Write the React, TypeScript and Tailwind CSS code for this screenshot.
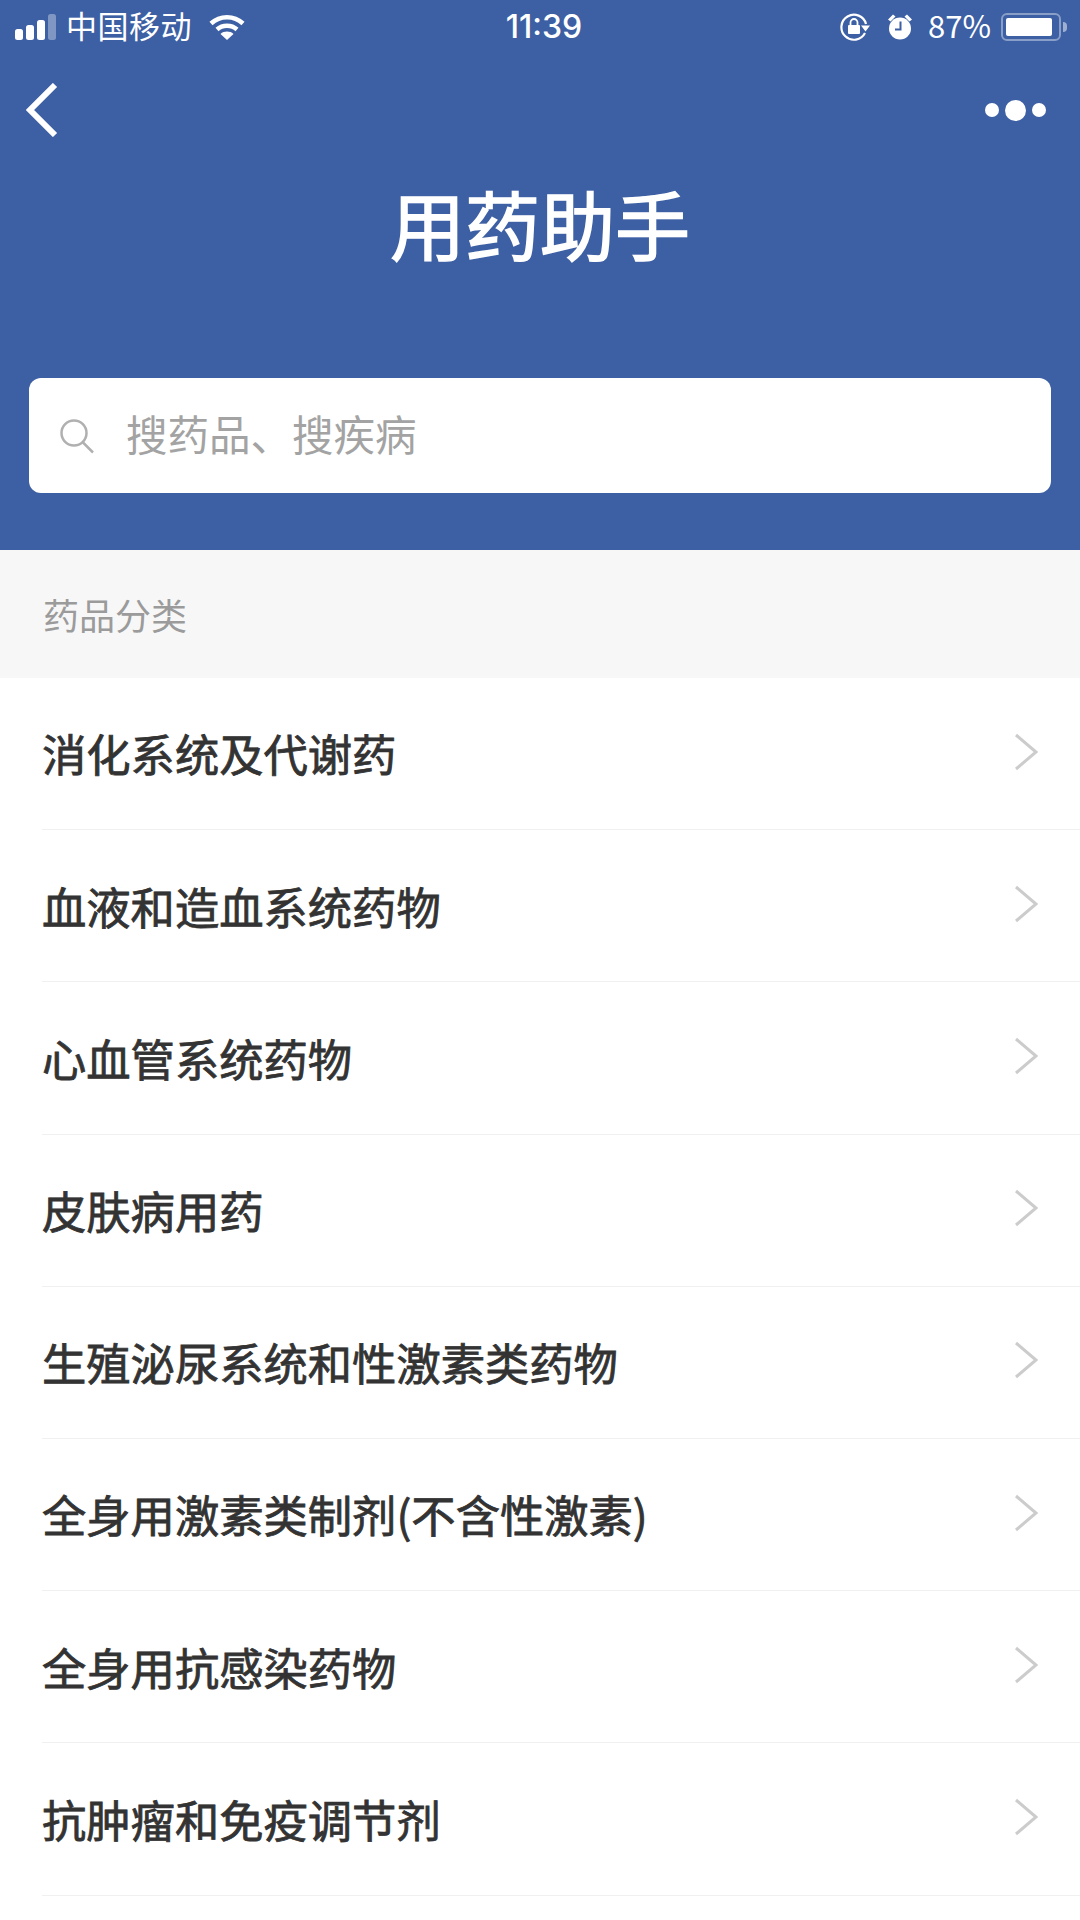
const CATEGORIES = [
  '消化系统及代谢药',
  '血液和造血系统药物',
  '心血管系统药物',
  '皮肤病用药',
  '生殖泌尿系统和性激素类药物',
  '全身用激素类制剂(不含性激素)',
  '全身用抗感染药物',
  '抗肿瘤和免疫调节剂',
]

function StatusBar() {
  return (
    <div className="h-[54px] grid grid-cols-[1fr_auto_1fr] items-center pl-[15px] pr-[13px] text-white">
      <div className="flex items-center">
        <svg width="41" height="26" viewBox="0 0 41 26" fill="white">
          <rect x="0" y="15" width="8" height="11" rx="2.5" />
          <rect x="11" y="11" width="8" height="15" rx="2.5" />
          <rect x="22" y="6" width="8" height="20" rx="2.5" />
          <rect x="33" y="0" width="8" height="26" rx="2.5" opacity="0.35" />
        </svg>
        <span className="ml-[10px] pb-[5px] text-[31px] leading-none tracking-[0.5px]">中国移动</span>
        <svg className="ml-[17px]" width="36" height="26" viewBox="0 0 36 26" fill="none" stroke="white" strokeWidth="4.5">
          <path d="M2 9.5C11 1 25 1 34 9.5" />
          <path d="M8 15.5C13.5 10.5 22.5 10.5 28 15.5" />
          <path d="M18 26L11.5 20C15 16.8 21 16.8 24.5 20Z" fill="white" stroke="none" />
        </svg>
      </div>
      <span className="ml-[6px] font-['Inter'] text-[32px] leading-none font-medium">11:39</span>
      <div className="flex items-center justify-end">
        <svg width="30" height="28" viewBox="0 0 30 28" fill="none" stroke="white" strokeWidth="2.2">
          <path d="M25 20A12.5 12.5 0 1 1 26 11" />
          <path d="M21 12.5h9l-4.5 6z" fill="white" stroke="none" />
          <rect x="8" y="12" width="12" height="9" rx="1" fill="white" stroke="none" />
          <path d="M10.5 12V9.5a3.5 3.5 0 0 1 7 0V12" strokeWidth="1.8" />
        </svg>
        <svg className="ml-[17px]" width="26" height="28" viewBox="0 0 26 28" fill="white">
          <circle cx="13" cy="15.5" r="11" />
          <path d="M1 6.5L6 1.500l2.500 2-5 5zM25 6.500l-5-5-2.500 2 5 5z" />
          <path d="M13.500 8.500V16.500H8" fill="none" stroke="#3d5fa3" strokeWidth="2" />
        </svg>
        <span className="ml-[15px] pb-[5px] text-[31px] leading-none">87%</span>
        <div className="ml-[10px] flex items-center">
          <div className="w-[60px] h-[28px] rounded-[6px] border-2 border-white/40 p-[3px]">
            <div className="h-full w-[46px] rounded-[2px] bg-white" />
          </div>
          <div className="ml-[2px] w-[4px] h-[10px] rounded-r-full bg-white/50" />
        </div>
      </div>
    </div>
  )
}

function Header() {
  return (
    <div className="h-[550px] bg-[#3d5fa3] flex flex-col">
      <StatusBar />
      <div className="h-[112px] flex items-center justify-between pl-[26px] pr-[34px]">
        <svg width="32" height="54" viewBox="0 0 32 54" fill="none" stroke="white" strokeWidth="6">
          <path d="M29 2L4 27L29 52" />
        </svg>
        <div className="flex items-center gap-[6px]">
          <div className="w-[14px] h-[14px] rounded-full bg-white" />
          <div className="w-[21px] h-[21px] rounded-full bg-white" />
          <div className="w-[14px] h-[14px] rounded-full bg-white" />
        </div>
      </div>
      <h1 className="mt-[13px] h-[86px] flex items-center justify-center text-white text-[75px] leading-none [-webkit-text-stroke:1.5px_white]">用药助手</h1>
      <div className="mt-[113px] mx-[29px] h-[115px] rounded-[12px] bg-white flex items-center pl-[30px]">
        <svg width="36" height="36" viewBox="0 0 36 36" fill="none" stroke="#b0b0b0" strokeWidth="2.500">
          <circle cx="15" cy="15" r="12.500" />
          <path d="M23.500 24L34 34.500" />
        </svg>
        <span className="ml-[31px] pb-[4px] text-[41.500px] leading-none text-[#a3a3a3]">搜药品、搜疾病</span>
      </div>
    </div>
  )
}

export default function App() {
  return (
    <div className="w-[1080px] h-[1920px] overflow-hidden bg-white font-['Noto_Sans_CJK_SC','Noto_Sans',sans-serif]">
      <Header />
      <div className="h-[128px] bg-[#f7f7f7] flex items-center pl-[43px] text-[36px] leading-none text-[#9b9b9b]">药品分类</div>
      <div className="pl-[42px]">
        {CATEGORIES.map((name) => (
          <div key={name} className="h-[152.2px] border-b border-[#f0f0f0] flex items-center justify-between pr-[42px]">
            <span className="text-[44.300px] leading-none text-[#333333] [-webkit-text-stroke:0.8px_#333333]">{name}</span>
            <svg className="-mt-[4px]" width="24" height="38" viewBox="0 0 24 38" fill="none" stroke="#cccccc" strokeWidth="3">
              <path d="M2 2L22 19L2 36" />
            </svg>
          </div>
        ))}
      </div>
    </div>
  )
}
